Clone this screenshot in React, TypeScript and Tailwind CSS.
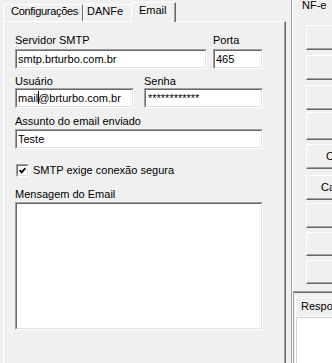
import React from "react";

const font = "font-['Liberation_Sans',Arial,sans-serif] text-[11px] leading-[13px] text-black";

// classic sunken 3D edit box
function Field({ className, children }: { className: string; children?: React.ReactNode }) {
  return (
    <div className={`border border-t-[#a0a0a0] border-l-[#a0a0a0] border-b-white border-r-white ${className}`}>
      <div className="h-full border border-t-[#696969] border-l-[#696969] border-b-[#e3e3e3] border-r-[#e3e3e3] bg-white pl-px leading-[16px] whitespace-nowrap overflow-hidden">
        {children}
      </div>
    </div>
  );
}

const buttons = [
  { cls: "mt-[14px] h-[25px]", label: "", pad: "" },
  { cls: "mt-[5px] h-[25px]", label: "", pad: "" },
  { cls: "mt-[5px] h-[25px]", label: "", pad: "" },
  { cls: "mt-[2px] h-[28px]", label: "", pad: "" },
  { cls: "mt-[4px] h-[25px]", label: "Consultar", pad: "pl-[19px]" },
  { cls: "mt-[6px] h-[25px]", label: "Cancelar", pad: "pl-[14px]" },
  { cls: "mt-[3px] h-[25px]", label: "", pad: "" },
  { cls: "mt-[4px] h-[24px]", label: "", pad: "" },
  { cls: "mt-[4px] h-[24px]", label: "", pad: "" },
];

export default function App() {
  return (
    <div className={`w-[332px] h-[363px] bg-[#f0f0f0] overflow-hidden flex ${font}`}>
      {/* LEFT: tab control */}
      <div className="w-[286px] pl-[3px] flex flex-col shrink-0">
        <div className="h-[21px] flex items-end">
          <div className="w-[80px] h-[17px] border-t border-l border-white border-r border-r-[#696969] pl-[7px] tracking-[-0.3px] whitespace-nowrap overflow-hidden">
            Configurações
          </div>
          <div className="w-[48px] h-[17px] border-t border-l border-white pl-[3px] whitespace-nowrap overflow-hidden">
            DANFe
          </div>
          <div className="relative z-10 -mb-px w-[45px] h-[20px] bg-[#f0f0f0] border-t border-l border-white border-r border-r-[#696969]">
            <div className="h-full border-r border-[#a0a0a0] pl-[7px] pt-px">Email</div>
          </div>
        </div>

        <div className="flex-1 w-[283px] border-t border-l border-white border-r border-r-[#696969]">
          <div className="h-full border-r border-[#a0a0a0] pl-[11px] flex flex-col">
            {/* SMTP / Porta */}
            <div className="mt-[12px] flex gap-[6px]">
              <div className="w-[192px]">
                <div>Servidor SMTP</div>
                <Field className="mt-[2px] h-[20px]">smtp.brturbo.com.br</Field>
              </div>
              <div className="w-[50px]">
                <div>Porta</div>
                <Field className="mt-[2px] h-[20px]">465</Field>
              </div>
            </div>

            {/* Usuario / Senha */}
            <div className="mt-[6px] flex gap-[10px]">
              <div className="w-[119px]">
                <div>Usuário</div>
                <Field className="h-[20px]">
                  mail
                  <span className="inline-block w-px h-[13px] -mr-px bg-black align-[-2px]" />
                  @brturbo.com.br
                </Field>
              </div>
              <div className="w-[119px]">
                <div>Senha</div>
                <Field className="h-[20px]">
                  <span className="pl-px">************</span>
                </Field>
              </div>
            </div>

            <div className="mt-[7px]">Assunto do email enviado</div>
            <Field className="mt-px w-[248px] h-[20px]">Teste</Field>

            {/* checkbox */}
            <div className="mt-[15px] ml-px h-[13px] flex items-center gap-[4px]">
              <div className="w-[13px] h-[13px] border border-t-[#a0a0a0] border-l-[#a0a0a0] border-b-white border-r-white">
                <div className="w-full h-full border border-t-[#696969] border-l-[#696969] border-b-[#e3e3e3] border-r-[#e3e3e3] bg-white flex items-center justify-center">
                  <svg width="7" height="7" viewBox="0 0 7 7">
                    <path d="M0.5 3 L2.6 5.3 L6.5 1" fill="none" stroke="#000" strokeWidth="1.8" />
                  </svg>
                </div>
              </div>
              <span>SMTP exige conexão segura</span>
            </div>

            <div className="mt-[11px]">Mensagem do Email</div>
            <Field className="mt-px w-[248px] h-[128px]" />
          </div>
        </div>
      </div>

      {/* RIGHT: NF-e group */}
      <div className="ml-[5px] flex-1 border-l border-[#a0a0a0]">
        <div className="h-full border-l border-white flex flex-col">
          <div className="h-[291px]">
            <div className="h-[11px] leading-[11px] pl-[9px]">NF-e</div>
            <div className="pl-[13px] flex flex-col">
              {buttons.map((b, i) => (
                <div
                  key={i}
                  className={`w-[80px] border-t border-l border-white border-b border-r border-b-[#696969] border-r-[#696969] ${b.cls}`}
                >
                  <div className={`h-full border-b border-r border-[#a0a0a0] flex items-center whitespace-nowrap ${b.pad}`}>
                    {b.label}
                  </div>
                </div>
              ))}
            </div>
          </div>

          {/* lower: Respo... tab */}
          <div className="flex-1 border-t border-l border-[#a0a0a0]">
            <div className="h-full border-t border-[#696969] flex flex-col">
              <div className="mt-[4px] ml-px h-[19px] border-t border-l border-white pl-[5px] pt-[2px] whitespace-nowrap">
                Resposta
              </div>
              <div className="flex-1 ml-px border-t border-l border-white">
                <div className="h-full bg-white border-t border-l border-[#d0d0d0]" />
              </div>
            </div>
          </div>
        </div>
      </div>
    </div>
  );
}
